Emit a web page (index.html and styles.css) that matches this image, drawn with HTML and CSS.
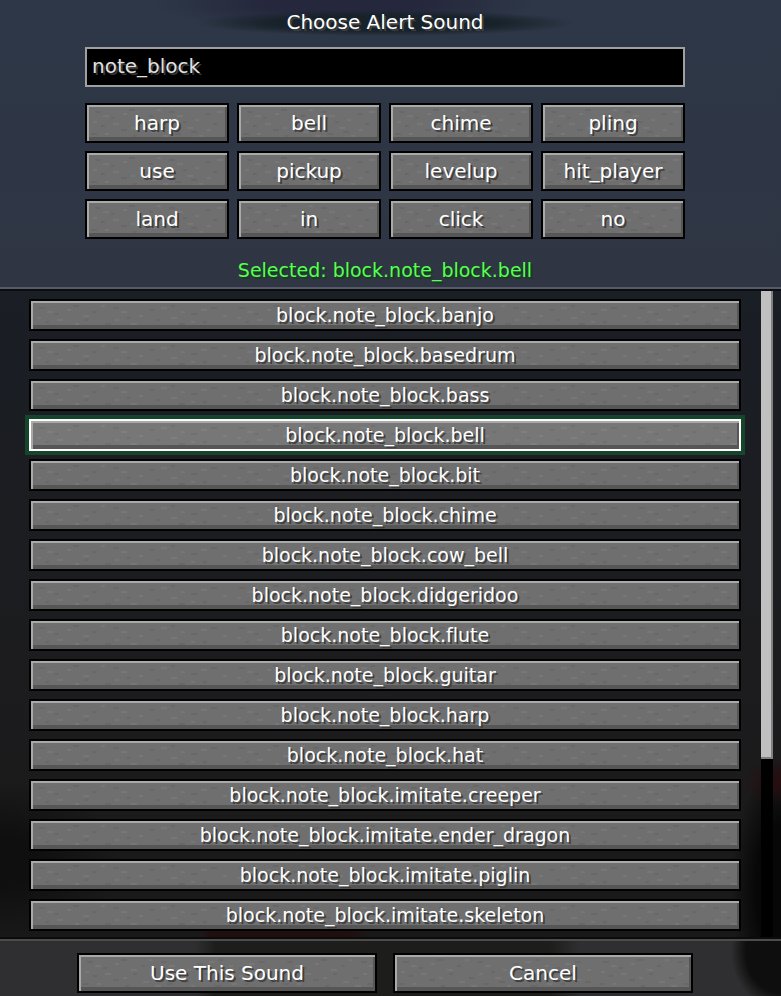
FILE: index.html
```
<!DOCTYPE html>
<html lang="en">
<head>
  <meta charset="UTF-8">
  <title>Choose Alert Sound</title>
  <link rel="stylesheet" href="styles.css">
</head>
<body>
  <header class="top">
    <h1>Choose Alert Sound</h1>
    <input type="text" class="search" aria-label="Search sounds" value="note_block" spellcheck="false">
    <div class="filters">
      <button>harp</button>
      <button>bell</button>
      <button>chime</button>
      <button>pling</button>
      <button>use</button>
      <button>pickup</button>
      <button>levelup</button>
      <button>hit_player</button>
      <button>land</button>
      <button>in</button>
      <button>click</button>
      <button>no</button>
    </div>
    <p class="status">Selected: block.note_block.bell</p>
  </header>

  <main class="list">
    <div class="rows">
      <button>block.note_block.banjo</button>
      <button>block.note_block.basedrum</button>
      <button>block.note_block.bass</button>
      <button class="selected">block.note_block.bell</button>
      <button>block.note_block.bit</button>
      <button>block.note_block.chime</button>
      <button>block.note_block.cow_bell</button>
      <button>block.note_block.didgeridoo</button>
      <button>block.note_block.flute</button>
      <button>block.note_block.guitar</button>
      <button>block.note_block.harp</button>
      <button>block.note_block.hat</button>
      <button>block.note_block.imitate.creeper</button>
      <button>block.note_block.imitate.ender_dragon</button>
      <button>block.note_block.imitate.piglin</button>
      <button>block.note_block.imitate.skeleton</button>
    </div>
    <div class="scrollbar"><div class="thumb"></div></div>
  </main>

  <footer class="actions">
    <button>Use This Sound</button>
    <button>Cancel</button>
  </footer>
</body>
</html>
```
FILE: styles.css
```
* {
  box-sizing: border-box;
}

body {
  margin: 0;
  min-height: 100vh;
  display: flex;
  flex-direction: column;
  background: #1b1d20;
  color: #fff;
  font-family: "DejaVu Sans", sans-serif;
  font-size: 20px;
  line-height: 20px;
  font-variant-ligatures: none;
}

h1, p {
  margin: 0;
  font-size: 20px;
  font-weight: normal;
  text-align: center;
}

/* stone buttons */
button {
  height: 40px;
  padding: 0;
  border: 2px solid #000;
  background-color: #6f6f6f;
  background-image: url("data:image/svg+xml,%3Csvg xmlns='http://www.w3.org/2000/svg' width='200' height='36' shape-rendering='crispEdges'%3E%3Cpath fill='none' stroke='%23000' stroke-opacity='.06' stroke-width='2' d='M8 7h6M24 13h4M42 5h6M62 11h4M82 7h6M96 17h4M118 9h6M140 5h4M160 13h6M180 7h6M14 21h4M34 25h6M54 19h4M74 23h6M104 27h6M126 19h4M148 23h6M172 21h4M190 27h6M4 29h6M46 31h4M88 29h6M136 31h6M166 29h4'/%3E%3Cpath fill='none' stroke='%23fff' stroke-opacity='.06' stroke-width='2' d='M16 11h6M36 9h4M52 15h6M70 5h4M90 11h6M108 15h4M130 7h6M150 11h4M170 9h6M192 15h4M6 17h4M26 19h6M44 23h4M64 27h6M84 19h4M100 23h6M120 25h4M140 17h6M160 21h4M180 25h6M18 29h4M76 31h6M112 31h4M152 29h6'/%3E%3C/svg%3E");
  box-shadow: inset 2px 2px #a9a9a9, inset -2px -4px #565656;
  color: #fff;
  font: inherit;
  font-variant-ligatures: none;
  text-align: center;
  text-shadow: 2px 2px #3e3e3e;
  cursor: pointer;
}

button:hover {
  border-color: #fff;
}

/* header */
.top {
  display: flex;
  flex-direction: column;
  align-items: center;
  padding: 12px 11px 7px 0;
  border-bottom: 2px solid #555b68;
  background:
    radial-gradient(ellipse 190px 13px at 385px 23px, #18222a 60%, transparent),
    radial-gradient(ellipse 190px 26px at 345px 4px, #25273c 40%, transparent),
    linear-gradient(#2d3747, #2f3543);
}

.top h1 {
  text-shadow: 2px 2px #3e3e3e;
}

.search {
  width: 600px;
  max-width: 100%;
  height: 40px;
  margin-top: 15px;
  padding: 0 5px 2px;
  border: 2px solid #a0a0a0;
  background: #000;
  color: #e0e0e0;
  font: inherit;
  text-shadow: 2px 2px #383838;
  outline: none;
}

.filters {
  width: 600px;
  max-width: 100%;
  display: grid;
  grid-template-columns: repeat(4, 1fr);
  gap: 8px;
  margin-top: 16px;
}

.status {
  margin-top: 21px;
  color: #55ff55;
  font-size: 19px;
  text-shadow: 2px 2px #153f15;
}

/* sound list */
.list {
  flex: 1;
  display: flex;
  justify-content: space-between;
  padding-right: 8px;
  border-top: 2px solid #0b0d10;
  border-bottom: 2px solid #0b0b0b;
  background:
    radial-gradient(ellipse 40px 24px at 100% 490px, #290d0f, transparent),
    radial-gradient(ellipse 50px 130px at 100% 600px, #070707 50%, transparent),
    radial-gradient(ellipse 120px 80px at 0 570px, #0f0f0f 30%, transparent),
    linear-gradient(90deg, transparent 200px, #210f10 210px, #210f10 350px, transparent 370px) 0 100% / 100% 8px no-repeat,
    linear-gradient(#1a1e25, #1c1c1e 60%, #191919);
}

.rows {
  flex: 1;
  display: flex;
  flex-direction: column;
  gap: 8px;
  padding: 8px 20px 6px 29px;
}

.rows button {
  height: 32px;
  font-size: 19px;
}

.rows .selected {
  border-color: #fff;
  background-color: #777;
  outline: 4px solid #15452b;
}

.scrollbar {
  width: 12px;
  background: #000;
}

.thumb {
  height: 72.5%;
  background: #c0c0c0;
  border-right: 2px solid #808080;
  border-bottom: 2px solid #808080;
}

/* bottom buttons */
.actions {
  display: flex;
  justify-content: center;
  gap: 16px;
  padding: 12px 11px 3px 0;
  border-top: 2px solid #4c4c4c;
  background:
    radial-gradient(ellipse 50px 60px at 100% 10px, #0e0e0e 70%, transparent),
    linear-gradient(90deg, #2f2f31 195px, #1d1e1c 215px, #1d1d1c 550px, #2f2f31 580px);
}

.actions button {
  width: 300px;
}
```
